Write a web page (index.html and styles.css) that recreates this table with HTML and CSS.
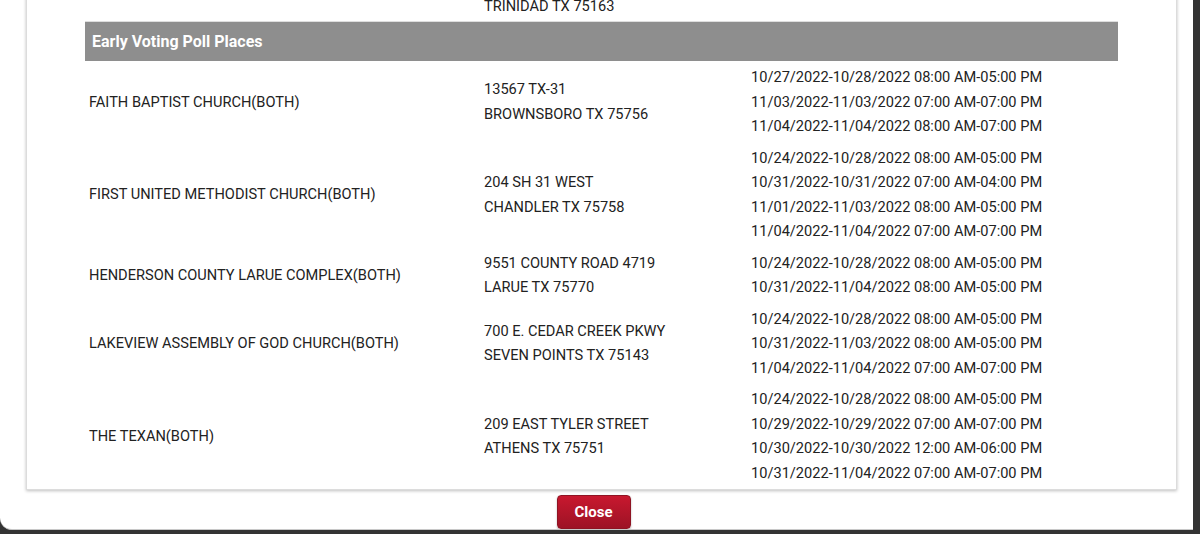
FILE: index.html
```html
<!DOCTYPE html>
<html>
<head>
<meta charset="utf-8">
<link rel="stylesheet" href="styles.css">
</head>
<body>
<div class="modal">
  <div class="panel">
    <table class="polls">
      <colgroup><col class="c1"><col class="c2"><col class="c3"></colgroup>
      <tbody>
        <tr>
          <td></td>
          <td><div class="ln">ROUTE 1 BOX</div><div class="ln">TRINIDAD TX 75163</div></td>
          <td></td>
        </tr>
        <tr class="head"><th colspan="3">Early Voting Poll Places</th></tr>
        <tr>
          <td>FAITH BAPTIST CHURCH(BOTH)</td>
          <td><div class="ln">13567 TX-31</div><div class="ln">BROWNSBORO TX 75756</div></td>
          <td><div class="ln">10/27/2022-10/28/2022 08:00 AM-05:00 PM</div><div class="ln">11/03/2022-11/03/2022 07:00 AM-07:00 PM</div><div class="ln">11/04/2022-11/04/2022 08:00 AM-07:00 PM</div></td>
        </tr>
        <tr>
          <td>FIRST UNITED METHODIST CHURCH(BOTH)</td>
          <td><div class="ln">204 SH 31 WEST</div><div class="ln">CHANDLER TX 75758</div></td>
          <td><div class="ln">10/24/2022-10/28/2022 08:00 AM-05:00 PM</div><div class="ln">10/31/2022-10/31/2022 07:00 AM-04:00 PM</div><div class="ln">11/01/2022-11/03/2022 08:00 AM-05:00 PM</div><div class="ln">11/04/2022-11/04/2022 07:00 AM-07:00 PM</div></td>
        </tr>
        <tr>
          <td>HENDERSON COUNTY LARUE COMPLEX(BOTH)</td>
          <td><div class="ln">9551 COUNTY ROAD 4719</div><div class="ln">LARUE TX 75770</div></td>
          <td><div class="ln">10/24/2022-10/28/2022 08:00 AM-05:00 PM</div><div class="ln">10/31/2022-11/04/2022 08:00 AM-05:00 PM</div></td>
        </tr>
        <tr>
          <td>LAKEVIEW ASSEMBLY OF GOD CHURCH(BOTH)</td>
          <td><div class="ln">700 E. CEDAR CREEK PKWY</div><div class="ln">SEVEN POINTS TX 75143</div></td>
          <td><div class="ln">10/24/2022-10/28/2022 08:00 AM-05:00 PM</div><div class="ln">10/31/2022-11/03/2022 08:00 AM-05:00 PM</div><div class="ln">11/04/2022-11/04/2022 07:00 AM-07:00 PM</div></td>
        </tr>
        <tr>
          <td>THE TEXAN(BOTH)</td>
          <td><div class="ln">209 EAST TYLER STREET</div><div class="ln">ATHENS TX 75751</div></td>
          <td><div class="ln">10/24/2022-10/28/2022 08:00 AM-05:00 PM</div><div class="ln">10/29/2022-10/29/2022 07:00 AM-07:00 PM</div><div class="ln">10/30/2022-10/30/2022 12:00 AM-06:00 PM</div><div class="ln">10/31/2022-11/04/2022 07:00 AM-07:00 PM</div></td>
        </tr>
      </tbody>
    </table>
  </div>
  <div class="footer">
    <button class="close">Close</button>
  </div>
</div>
</body>
</html>
```
FILE: styles.css
```css
html, body {
  margin: 0;
  padding: 0;
  height: 100%;
  overflow: hidden;
  background: #333333;
  font-family: Roboto, "Liberation Sans", Arial, sans-serif;
}
.modal {
  width: 1193px;
  height: 530px;
  background: #ffffff;
  border-bottom: 1px solid #c8c8c8;
  border-bottom-left-radius: 12px;
  box-sizing: border-box;
  overflow: hidden;
}
.panel {
  margin: -36px 0 0 26px;
  width: 1151px;
  height: 526px;
  box-sizing: border-box;
  border: 1px solid #dcdcdc;
  box-shadow: 0 1px 3px rgba(0,0,0,0.25);
  padding: 0 58px;
  background: #fff;
}
.polls {
  width: 100%;
  border-collapse: collapse;
  table-layout: fixed;
  color: #222222;
  font-size: 14.6px;
}
.c1 { width: 395px; }
.c2 { width: 267px; }
.polls td {
  padding: 4px 4px 3px;
  vertical-align: middle;
  line-height: 24.5px;
  white-space: nowrap;
}
.head th {
  background: #8e8e8e;
  border-top: 1px solid #dedede;
  color: #ffffff;
  font-weight: 700;
  font-size: 16px;
  text-align: left;
  height: 39px;
  padding: 0 7px;
}
.footer {
  display: flex;
  justify-content: center;
  padding: 5px 6px 0 0;
}
.close {
  width: 74px;
  height: 34px;
  border: 1px solid #8e1423;
  border-radius: 4px;
  background: linear-gradient(#c8182f, #9d1325);
  color: #ffffff;
  font-family: Roboto, "Liberation Sans", Arial, sans-serif;
  font-weight: 700;
  font-size: 15px;
  padding: 0;
  box-shadow: 0 1px 2px rgba(0,0,0,0.3);
}
```
